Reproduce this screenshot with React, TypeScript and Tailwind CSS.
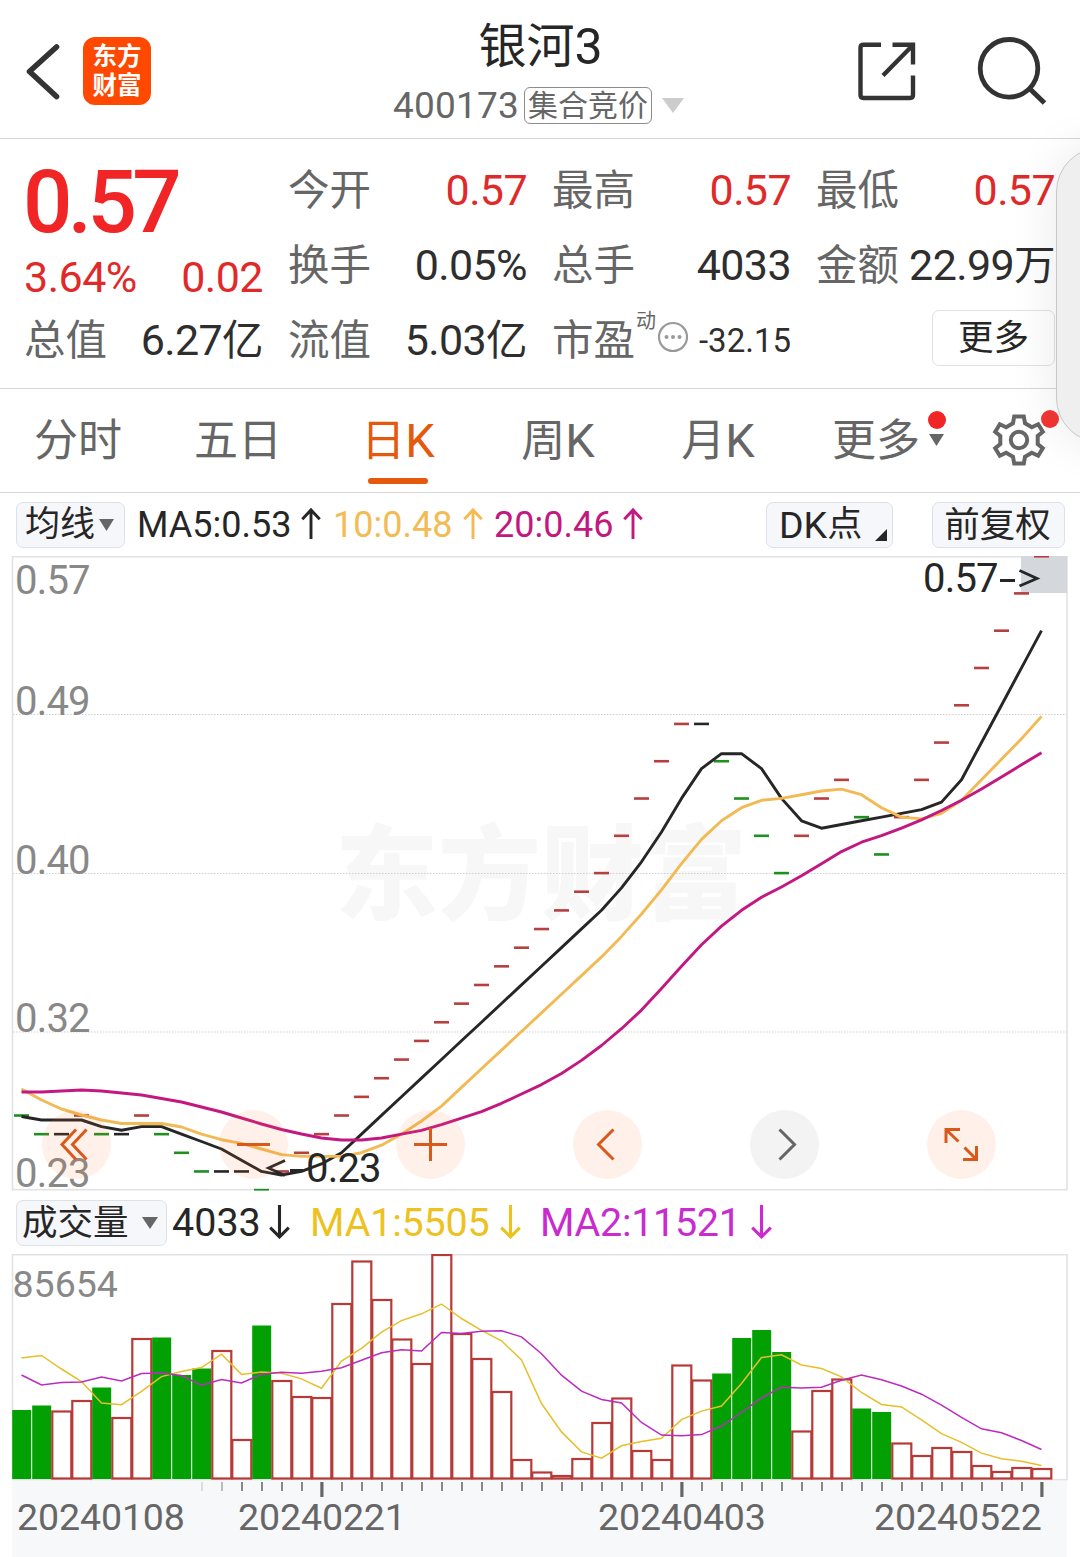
import React from "react";

const FONT = "font-['Roboto','Noto_Sans_CJK_SC',sans-serif]";

const STEP = 20;
const X0 = 21.5;
const xAt = (i: number) => X0 + i * STEP;

// Closing prices in cents, with the colour of each day's mark.
const closes = [
  27, 26, 26, 27, 26, 26, 27, 26, 25, 24, 24, 24, 23, 24, 25, 26, 27, 28, 29, 30, 31, 32, 33, 34, 35, 36, 37, 38, 39,
  40, 42, 44, 46, 48, 48, 46, 44, 42, 40, 42, 44, 45, 43, 41, 43, 45, 47, 49, 51, 53, 55, 57,
];
const marks = "ggkrgkrgggkkgrrrrrrrrrrrrrrrrrrrrrkggggrrrggrrrrrrrr";
const markColor: Record<string, string> = { g: "#1f9020", r: "#b5403f", k: "#262626" };

const CHART_TOP = 556;
const priceY = (cents: number) => CHART_TOP + ((57 - cents) * 634) / 34;

// Top edge of every volume bar; solid bars are falling days.
const volTops = [
  1410, 1405.5, 1411.5, 1401, 1387.5, 1418, 1339, 1337.5, 1375, 1368.5, 1351, 1440, 1325.5, 1381, 1397, 1398, 1304,
  1261.5, 1300, 1339.5, 1364, 1255, 1334, 1359, 1392, 1460, 1472.5, 1476, 1459, 1423, 1398.5, 1451, 1460, 1365.5,
  1380.5, 1373.5, 1338, 1330, 1352, 1431.5, 1391, 1379.5, 1408.5, 1412, 1443.5, 1456, 1448, 1452, 1466, 1472, 1468,
  1469,
];
const solid = new Set([0, 1, 4, 7, 8, 9, 12, 35, 36, 37, 38, 42, 43]);

function averageLine(ys: number[], span: number, head: number[]) {
  return ys
    .map((_, i) => {
      const y = i < head.length ? head[i] : ys.slice(i - span + 1, i + 1).reduce((a, b) => a + b, 0) / span;
      return `${xAt(i)},${y.toFixed(1)}`;
    })
    .join(" ");
}

const closeYs = closes.map(priceY);
const ma5 = averageLine(closeYs, 5, [1116.5, 1120, 1120, 1120]);
const ma10 = averageLine(closeYs, 10, [1089, 1100, 1109, 1115, 1120, 1123.5, 1123.5, 1123.5, 1127]);
const ma20 = averageLine(
  closeYs,
  20,
  [1092, 1092, 1091, 1090, 1091, 1093, 1095, 1098.5, 1102, 1107, 1112, 1118, 1124, 1129.5, 1134, 1138, 1140, 1140, 1138],
);
const vol5 = averageLine(volTops, 5, [1358, 1355.5, 1369, 1381.5]);
const vol10 = averageLine(volTops, 10, [1375, 1385, 1382.5, 1382, 1377, 1381, 1373.5, 1373, 1375.5]);

function Arrow({ up = false, className = "" }: { up?: boolean; className?: string }) {
  return (
    <svg
      viewBox="0 0 20 34"
      className={`shrink-0 ${className}`}
      fill="none"
      stroke="currentColor"
      strokeWidth="3"
    >
      {up ? <path d="M10 33V3M1 12.5L10 3L19 12.5" /> : <path d="M10 1V32M1 23L10 32L19 23" />}
    </svg>
  );
}

function Caret({ className = "" }: { className?: string }) {
  return (
    <svg viewBox="0 0 16 12" className={className} fill="currentColor" preserveAspectRatio="none">
      <path d="M0 0H16L8 12Z" />
    </svg>
  );
}

function Cell({ label, children, red = false }: { label: string; children: React.ReactNode; red?: boolean }) {
  return (
    <div className="flex h-[75px] items-center justify-between whitespace-nowrap leading-[75px]">
      <span className="-ml-px mb-px text-[41.5px] text-[#666]">{label}</span>
      <span className={`text-[43px] tracking-[-0.6px] ${red ? "text-[#e02a2a]" : "text-[#2e2e2e]"}`}>{children}</span>
    </div>
  );
}

function Header() {
  return (
    <header className="flex h-[139px] border-b border-[#d6d6d6]">
      <svg viewBox="0 0 83 138" className="h-[138px] w-[83px]" fill="none" stroke="#333" strokeWidth="5.6">
        <path d="M56.5 47L29.5 71.5L56.5 96.5" strokeLinecap="round" strokeLinejoin="round" />
      </svg>
      <div className="mt-[37px] flex h-[68px] w-[68px] flex-col items-center justify-center rounded-[12px] bg-[#ff4800] pb-[4px] font-['Noto_Sans_CJK_SC',sans-serif] text-[24.5px] font-bold leading-[29px] text-white">
        <span>东方</span>
        <span>财富</span>
      </div>
      <div className="flex flex-1 flex-col items-center pl-[86px]">
        <h1 className="ml-[4px] mt-[12px] flex h-[70px] items-center text-[48px] leading-[70px] text-[#262626]">
          银河<span className="text-[50px]">3</span>
        </h1>
        <div className="mt-[5px] flex h-[37px] items-center">
          <span className="text-[37px] leading-[37px] tracking-[0.2px] text-[#666]">400173</span>
          <span className="ml-[5px] flex h-[37px] w-[128px] items-center justify-center rounded-[6px] border border-[#8c8c8c] text-[30px] leading-[35px] text-[#666]">
            集合竞价
          </span>
          <Caret className="ml-[10px] h-[15px] w-[22px] text-[#ccc]" />
        </div>
      </div>
      <svg viewBox="840 0 240 138" className="h-[138px] w-[240px]" fill="none" stroke="#333" strokeWidth="4.4">
        <path d="M881 44.700H863.500Q860.500 44.700 860.500 47.700V95Q860.500 98 863.500 98H910Q913 98 913 95V75.500" />
        <path d="M892.500 44.700H913V64.500M883 75.500L912.500 45.500" />
        <circle cx="1009" cy="68.300" r="28.800" strokeWidth="4.800" />
        <path d="M1029.500 88.500L1044.500 103" strokeWidth="5" />
      </svg>
    </header>
  );
}

function Quote() {
  return (
    <section className="grid h-[250px] grid-cols-[238px_238px_238px_238px] gap-x-[26px] border-b border-[#d6d6d6] pl-[25px] pt-[14px]">
      <div>
        <div className="-ml-[2px] h-[98px] text-[87px] font-medium leading-[98px] tracking-[-4.6px] text-[#f12525]">0.57</div>
        <div className="flex h-[52px] items-center justify-between text-[43px] leading-[54px] tracking-[-0.5px] text-[#e02a2a]">
          <span className="-ml-px">3.64%</span>
          <span>0.02</span>
        </div>
        <Cell label="总值">
          6.27<span className="text-[41.5px]">亿</span>
        </Cell>
      </div>
      <div>
        <Cell label="今开" red>
          0.57
        </Cell>
        <Cell label="换手">0.05%</Cell>
        <Cell label="流值">
          5.03<span className="text-[41.5px]">亿</span>
        </Cell>
      </div>
      <div>
        <Cell label="最高" red>
          0.57
        </Cell>
        <Cell label="总手">4033</Cell>
        <div className="flex h-[75px] items-center leading-[75px]">
          <span className="-ml-px mb-px text-[41.5px] text-[#666]">市盈</span>
          <span className="mb-[40px] ml-px text-[20px] leading-[20px] text-[#666]">动</span>
          <svg viewBox="0 0 32 32" className="mb-[7px] ml-px h-[32px] w-[32px]" fill="#999">
            <circle cx="16" cy="16" r="14" fill="none" stroke="#999" strokeWidth="2.200" />
            <circle cx="9.500" cy="16" r="2" />
            <circle cx="16" cy="16" r="2" />
            <circle cx="22.500" cy="16" r="2" />
          </svg>
          <span className="ml-auto text-[33px] text-[#2e2e2e]">-32.15</span>
        </div>
      </div>
      <div>
        <Cell label="最低" red>
          0.57
        </Cell>
        <Cell label="金额">
          22.99<span className="text-[41.5px]">万</span>
        </Cell>
        <div className="ml-auto mt-[7px] flex h-[56px] w-[123px] items-center justify-center rounded-[7px] border border-[#dfe1e6] text-[35.5px] leading-[54px] text-[#262626]">
          更多
        </div>
      </div>
    </section>
  );
}

function Tab({ children, active = false }: { children: React.ReactNode; active?: boolean }) {
  return (
    <div
      className={`relative flex h-[103px] w-[160px] items-center justify-center pr-[2px] text-[44px] leading-[100px] ${
        active ? "text-[#e5590d]" : "text-[#666]"
      }`}
    >
      {children}
      {active && <span className="absolute bottom-[8px] left-[49px] h-[6px] w-[60px] rounded-full bg-[#e5590d]" />}
    </div>
  );
}

function Tabs() {
  const k = <span className="text-[47px]">K</span>;
  return (
    <nav className="flex h-[104px] border-b border-[#d6d6d6]">
      <div className="-ml-px flex">
        <Tab>分时</Tab>
        <Tab>五日</Tab>
        <Tab active>日{k}</Tab>
        <Tab>周{k}</Tab>
        <Tab>月{k}</Tab>
        <Tab>
          <span className="-ml-[4px]">更多</span>
          <span className="absolute left-[129px] top-[22px] h-[18px] w-[18px] rounded-full bg-[#f12525]" />
          <Caret className="absolute left-[130px] top-[45px] h-[12px] w-[15px]" />
        </Tab>
      </div>
      <div className="relative flex flex-1 items-center">
        <svg viewBox="-28 -28 56 56" className="mb-[2px] ml-[31.5px] h-[56px] w-[56px]" fill="none" stroke="#666" strokeWidth="4">
          <path d="M-4.800 -23.500H4.800L6 -16.800L12.800 -12.800L19.200 -15.800L23.800 -8.200L18.700 -4V4L23.800 8.200L19.200 15.800L12.800 12.800L6 16.800L4.800 23.500H-4.800L-6 16.800L-12.800 12.800L-19.200 15.800L-23.800 8.200L-18.700 4V-4L-23.800 -8.200L-19.200 -15.800L-12.800 -12.800L-6 -16.800Z" />
          <circle r="8.200" />
        </svg>
        <span className="absolute left-[81.500px] top-[21px] z-20 h-[18px] w-[18px] rounded-full bg-[#ee3333]" />
      </div>
    </nav>
  );
}

function IndicatorBar() {
  return (
    <div className="flex h-[63px] items-center pl-[16px] pr-[15px] text-[36px] leading-[44px]">
      <button className="flex h-[46px] w-[109px] shrink-0 items-center rounded-[7px] border border-[#dde1e8] bg-[#f6f7fa] pl-[8px] text-[35px] text-[#262626]">
        均线
        <Caret className="ml-[4px] h-[12px] w-[15px] text-[#666]" />
      </button>
      <span className="ml-[12px] w-[158px] text-[#262626]">MA5:0.53</span>
      <Arrow up className="mb-[3px] ml-[6px] h-[33px] w-[20px] text-[#262626]" />
      <span className="ml-[12px] w-[122px] text-[#f4bb55]">10:0.48</span>
      <Arrow up className="mb-[3px] ml-[8px] h-[33px] w-[20px] text-[#f4bb55]" />
      <span className="ml-[11px] w-[122px] text-[#c2187f]">20:0.46</span>
      <Arrow up className="mb-[3px] ml-[7px] h-[33px] w-[20px] text-[#c2187f]" />
      <button className="relative ml-auto flex h-[46px] w-[127px] items-center rounded-[7px] border border-[#dde1e8] bg-[#f6f7fa] pl-[12px] text-[37.5px] text-[#262626]">
        DK<span className="text-[35px]">点</span>
        <svg viewBox="0 0 12 12" className="absolute bottom-[6px] right-[5px] h-[12px] w-[12px]" fill="#262626">
          <path d="M12 0V12H0Z" />
        </svg>
      </button>
      <button className="ml-[39px] flex h-[46px] w-[133px] items-center justify-center rounded-[7px] border border-[#dde1e8] bg-[#f6f7fa] pr-[2px] text-[35.5px] text-[#262626]">
        前复权
      </button>
    </div>
  );
}

function RoundButton({ children, gray = false }: { children: React.ReactNode; gray?: boolean }) {
  return (
    <button
      className={`h-[69px] w-[69px] rounded-full ${gray ? "bg-[#666]/8 text-[#666]" : "bg-[#ff6a20]/10 text-[#d9591a]"}`}
    >
      <svg viewBox="-34.5 -34.5 69 69" className="h-full w-full" fill="none" stroke="currentColor" strokeWidth="3">
        {children}
      </svg>
    </button>
  );
}

function PriceChart() {
  return (
    <section className="relative h-[636px]">
      <svg viewBox="0 556 1080 636" className="block h-[636px] w-[1080px]" fontFamily="Roboto, sans-serif">
        <text
          x="335"
          y="912"
          fontSize="103"
          fontWeight="900"
          fill="#f7f7f7"
          fontFamily="'Noto Sans CJK SC', sans-serif"
        >
          东方财富
        </text>
        {[714.5, 873.5, 1032].map((y) => (
          <line key={y} x1="13" x2="1067" y1={y} y2={y} stroke="#cfcfcf" strokeWidth="1" strokeDasharray="1.500 1.500" />
        ))}
        <rect x="12.500" y="556.700" width="1054.500" height="633" fill="none" stroke="#e2e2e2" strokeWidth="1.600" />
        <rect x="1021" y="556" width="46" height="37" fill="#d4d8dd" />
        {closes.map((c, i) => (
          <rect
            key={i}
            x={xAt(i) - 7.5}
            y={i === 51 ? 556 : priceY(c) - 1.2}
            width="15"
            height={i === 51 ? 1.600 : i === 12 ? 1.8 : 2.600}
            fill={markColor[marks[i]]}
          />
        ))}
        <g fill="none" strokeWidth="2.900" strokeLinejoin="round">
          <polyline points={ma5} stroke="#262626" />
          <polyline points={ma10} stroke="#f2ba55" />
          <polyline points={ma20} stroke="#c2187f" />
        </g>
        <g fontSize="40" fill="#888" letterSpacing="-0.8">
          <text x="15" y="594">0.57</text>
          <text x="15" y="715">0.49</text>
          <text x="15" y="874">0.40</text>
          <text x="15" y="1032">0.32</text>
          <text x="15" y="1187">0.23</text>
        </g>
        <g fontSize="40" fill="#262626" letterSpacing="-0.8">
          <text x="306" y="1182">0.23</text>
          <text x="923" y="592">0.57</text>
        </g>
        <g fill="none" stroke="#262626" strokeWidth="2.800">
          <path d="M285 1160.500L268.500 1168L285 1175.500M290 1170.500H303" />
          <path d="M1000 580.500H1015M1019.500 570.500L1037 578.500L1019.500 586" />
        </g>
      </svg>
      <div className="absolute left-[42px] top-[554px] flex gap-[108px]">
        <RoundButton>
          <path d="M-.5 -15L-14.500 0L-.5 15M10 -15L-4 0L10 15" />
        </RoundButton>
        <RoundButton>
          <path d="M-16.500 0H16.500" />
        </RoundButton>
        <RoundButton>
          <path d="M-16.500 0H16.500M0 -16.500V16.500" />
        </RoundButton>
        <RoundButton>
          <path d="M6 -15L-9 0L6 15" />
        </RoundButton>
        <RoundButton gray>
          <path d="M-5 -15L10 0L-5 15" />
        </RoundButton>
        <RoundButton>
          <path d="M-15.500 -1.500V-15H-1.500M-15 -14.500L-3 -3M15 1.500V15H1.500M14.500 14.500L3 3" />
        </RoundButton>
      </div>
    </section>
  );
}

function VolumeBar() {
  return (
    <div className="flex h-[62px] items-center pb-px pl-[16px] text-[39.5px] leading-[44px]">
      <button className="flex h-[46px] w-[151px] shrink-0 items-center rounded-[7px] border border-[#dde1e8] bg-[#f6f7fa] pl-[5px] text-[35.5px] text-[#262626]">
        成交量
        <Caret className="ml-[13px] h-[12px] w-[16px] text-[#666]" />
      </button>
      <span className="ml-[5px] w-[90px] text-[#262626]">4033</span>
      <Arrow className="mb-[3px] ml-[7px] h-[35px] w-[21px] text-[#262626]" />
      <span className="ml-[20px] w-[182px] tracking-[-0.2px] text-[#edc21f]">MA1:5505</span>
      <Arrow className="mb-[3px] ml-[8px] h-[35px] w-[21px] text-[#edc21f]" />
      <span className="ml-[19px] w-[204px] tracking-[-0.3px] text-[#c92bcf]">MA2:11521</span>
      <Arrow className="mb-[3px] ml-[7px] h-[35px] w-[21px] text-[#c92bcf]" />
    </div>
  );
}

function VolumeChart() {
  return (
    <svg viewBox="0 1254 1080 303" className="block h-[303px] w-[1080px]" fontFamily="Roboto, sans-serif">
      <rect x="12" y="1481" width="1055" height="76" fill="#f7f8fa" />
      <rect x="12.500" y="1254.700" width="1054.500" height="225" fill="none" stroke="#e2e2e2" strokeWidth="1.600" />
      <text x="12.500" y="1297" fontSize="37.500" fill="#888">
        85654
      </text>
      {volTops.map((y, i) =>
        solid.has(i) ? (
          <rect key={i} x={xAt(i) - 9.3} y={y} width="19" height={1479 - y} fill="#03a003" />
        ) : (
          <rect
            key={i}
            x={xAt(i) - 9.2}
            y={y}
            width="19"
            height={1478.500 - y}
            fill="#fff"
            stroke="#b83a38"
            strokeWidth="2.200"
          />
        ),
      )}
      <g fill="none" strokeWidth="1.500">
        <polyline points={vol5} stroke="#e6bf2a" />
        <polyline points={vol10} stroke="#bb2cbe" />
      </g>
      {closes.map((_, i) => {
        if (i < 9) return null;
        const major = (i - 15) % 18 === 0;
        return (
          <rect
            key={i}
            x={xAt(i) - (major ? 1.2 : 0.5)}
            y="1482"
            width={major ? 3.200 : 2}
            height={major ? 15 : 9}
            fill={major ? "#666" : i === 9 ? "#ddd" : i === 10 ? "#bbb" : "#888"}
          />
        );
      })}
      <g fontSize="37.500" fill="#666" letterSpacing="-0.1">
        <text x="17" y="1530">20240108</text>
        <text x="238" y="1530">20240221</text>
        <text x="598" y="1530">20240403</text>
        <text x="874" y="1530">20240522</text>
      </g>
    </svg>
  );
}

export default function App() {
  return (
    <main className={`relative h-[1557px] w-[1080px] overflow-hidden bg-white ${FONT}`}>
      <Header />
      <Quote />
      <Tabs />
      <IndicatorBar />
      <PriceChart />
      <VolumeBar />
      <VolumeChart />
      <div className="absolute left-[1056px] top-[147px] h-[296px] w-[120px] rounded-[45px] border border-[#c8c8c8] bg-[#efefef] shadow-[0_0_50px_rgba(0,0,0,0.09)]" />
    </main>
  );
}
